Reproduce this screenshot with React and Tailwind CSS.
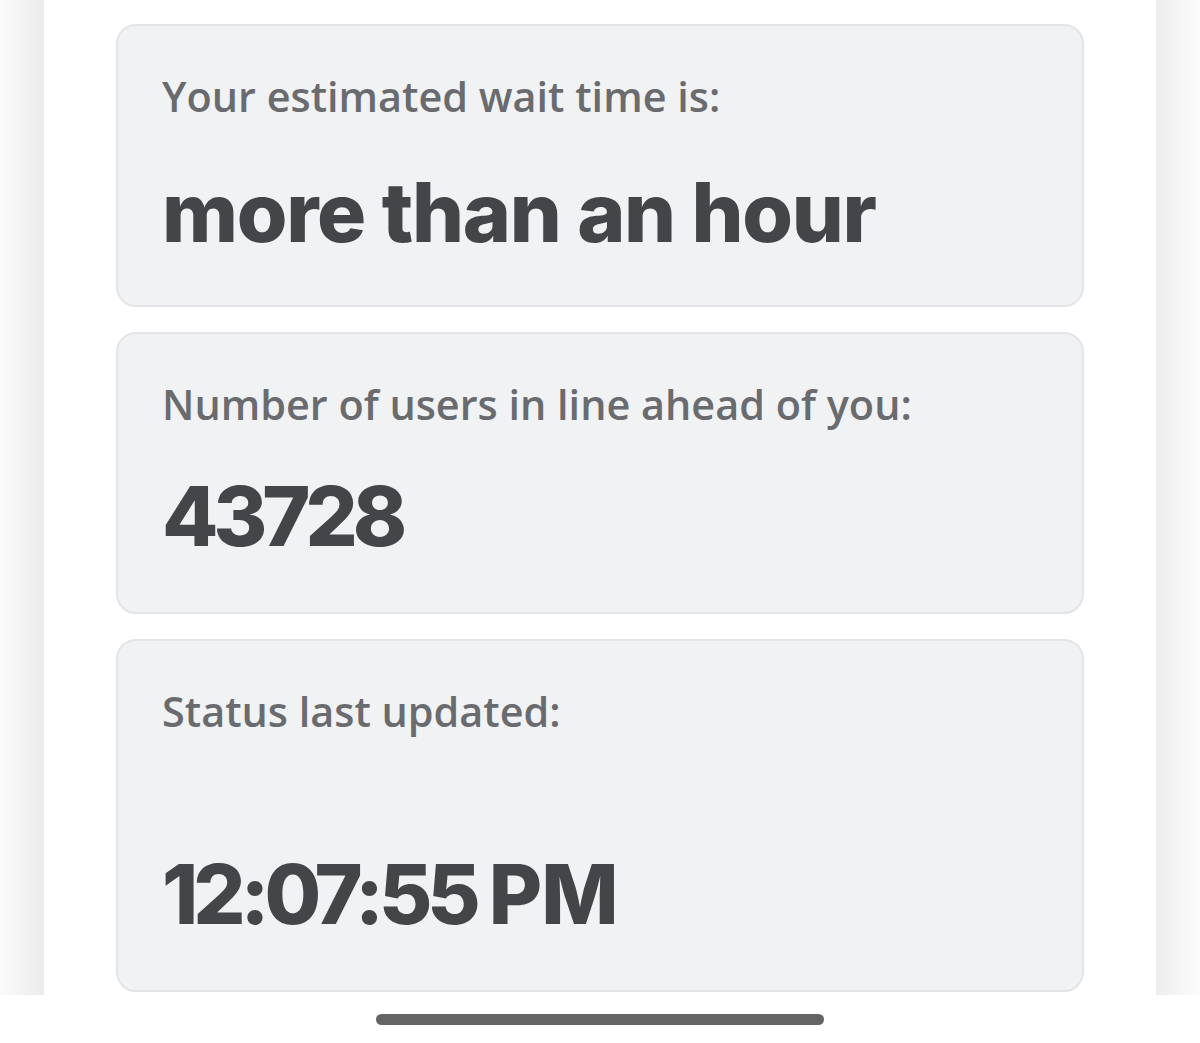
export default function App() {
  const label = "text-[41.4px] leading-[48px] font-semibold text-[#6a6b6f] whitespace-nowrap";
  const big = "text-[82px] leading-[82px] font-extrabold text-[#444548] whitespace-nowrap";
  const card = "box-border w-[968px] rounded-[20px] border-2 border-[#e3e4e7] bg-[#f1f2f4] pl-[44px] pt-[46px]";
  const bigFont = { fontFamily: 'Inter, Lato, sans-serif' };
  return (
    <div className="w-[1200px] h-[1043px] bg-white overflow-hidden flex flex-col" style={{ fontFamily: '"Open Sans", "Noto Sans", sans-serif' }}>
      <div className="flex h-[995px]">
        <div className="w-[44px] h-full bg-gradient-to-r from-[#fbfbfb] to-[#ebebeb]" />
        <div className="w-[1112px] h-full bg-white px-[72px] pt-[24px] flex flex-col gap-[25px]">
          <div className={card + " h-[283px]"}>
            <div className={label}>Your estimated wait time is:</div>
            <div className={big + " mt-[52px] tracking-[-1.3px]"} style={bigFont}>more than an hour</div>
          </div>
          <div className={card + " h-[282px]"}>
            <div className={label}>Number of users in line ahead of you:</div>
            <div className={big + " mt-[48px] tracking-[-5px]"} style={bigFont}>43728</div>
          </div>
          <div className={card + " h-[353px]"}>
            <div className={label}>Status last updated:</div>
            <div className={big + " mt-[119px] tracking-[-5px]"} style={bigFont}>12:07:55 <span className="tracking-[-1px]">PM</span></div>
          </div>
        </div>
        <div className="w-[44px] h-full bg-gradient-to-r from-[#ededed] to-[#fcfcfc]" />
      </div>
      <div className="flex-1 flex justify-center pt-[19px]">
        <div className="w-[448px] h-[11px] rounded-full bg-[#646464]" />
      </div>
    </div>
  );
}
